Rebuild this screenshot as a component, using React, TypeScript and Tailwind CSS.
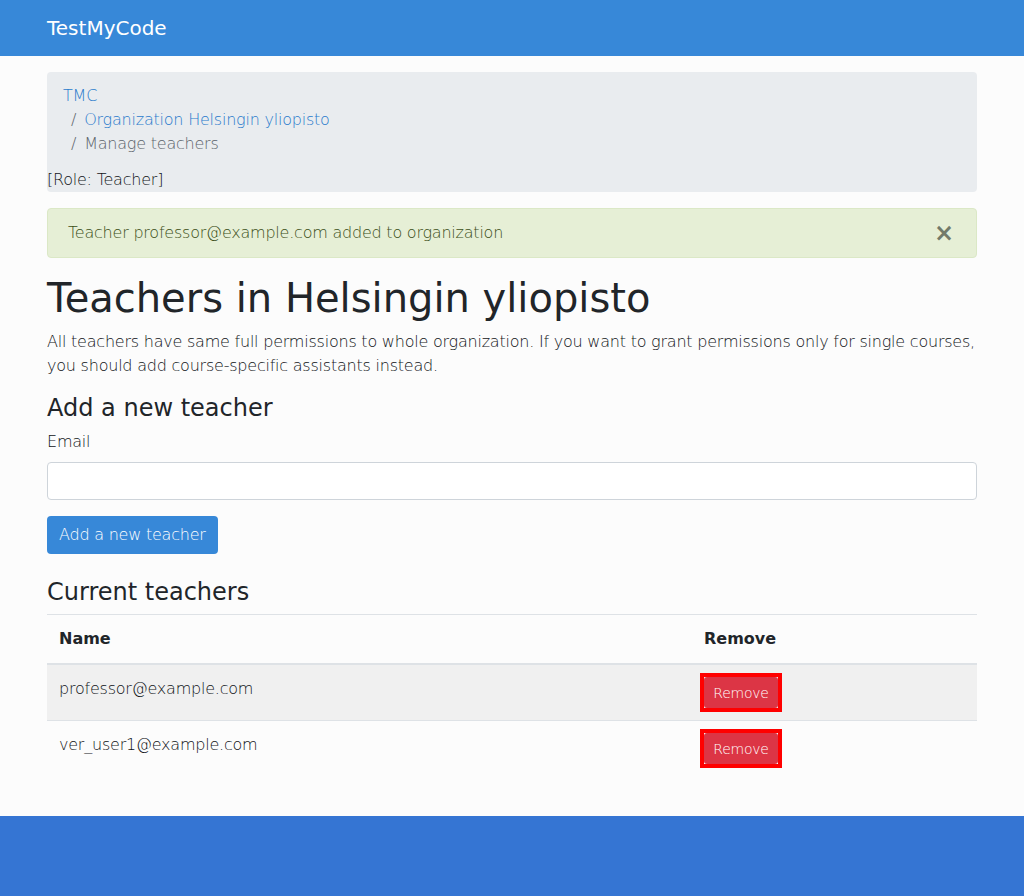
const teachers = ["professor@example.com", "ver_user1@example.com"];

const App = () => {
    return (
        <div className="min-h-[896px] flex flex-col bg-[#fcfcfc] text-[#111418] text-base leading-6 font-light tracking-[-0.22px]" style={{ fontFamily: '"DejaVu Sans", sans-serif' }}>
            <nav className="h-14 bg-[#3788d8] flex items-center">
                <div className="w-[930px] mx-auto">
                    <span className="text-white text-xl leading-[30px] font-normal tracking-normal">TestMyCode</span>
                </div>
            </nav>

            <main className="w-[930px] mx-auto mt-4 mb-10">
                <div className="bg-[#e9ecef] rounded">
                    <ol className="py-3 px-4">
                        <li><a className="text-[#2a7bcc]">TMC</a></li>
                        <li className="pl-2"><span className="text-[#5c646b] pr-2">/</span><a className="text-[#2a7bcc]">Organization Helsingin yliopisto</a></li>
                        <li className="pl-2 text-[#5c646b]"><span className="pr-2">/</span>Manage teachers</li>
                    </ol>
                    <div>[Role: Teacher]</div>
                </div>

                <div className="mt-4 mb-4 flex items-center justify-between border border-[#dbe8c6] bg-[#e6efd6] text-[#3b4e17] rounded py-3 pl-5 pr-5">
                    <span>Teacher professor@example.com added to organization</span>
                    <span className="text-2xl leading-none font-bold text-[#737a69] mr-[2px]">×</span>
                </div>

                <h1 className="text-[40px] leading-[48px] font-medium tracking-normal text-[#212529] mb-2">Teachers in Helsingin yliopisto</h1>
                <p className="mb-4">All teachers have same full permissions to whole organization. If you want to grant permissions only for single courses, you should add course-specific assistants instead.</p>

                <h2 className="text-2xl leading-[28px] font-medium tracking-normal text-[#212529] mb-2">Add a new teacher</h2>
                <label className="block mb-2">Email</label>
                <input type="email" className="block w-full h-[38px] bg-white border border-[#ced4da] rounded px-3 mb-4" />
                <button className="h-[38px] px-3 rounded bg-[#3788d8] text-white">Add a new teacher</button>

                <h2 className="text-2xl leading-[28px] font-medium tracking-normal text-[#212529] mt-6 mb-2">Current teachers</h2>
                <table className="w-full border-collapse">
                    <thead>
                        <tr className="border-t border-[#dee2e6] border-b-2">
                            <th className="w-[645px] text-left font-bold tracking-normal text-[#212529] p-3">Name</th>
                            <th className="text-left font-bold tracking-normal text-[#212529] p-3">Remove</th>
                        </tr>
                    </thead>
                    <tbody>
                        {teachers.map((email, i) => (
                            <tr key={email} className={`border-t border-[#dee2e6] ${i % 2 === 0 ? "bg-[#f0f0f0]" : ""}`}>
                                <td className="p-3 align-top">{email}</td>
                                <td className="p-3 align-top">
                                    <span className="block w-fit -m-1 border-4 border-[#ff0000]">
                                        <button className="block w-[74px] h-[31px] text-sm text-center rounded-[3px] bg-[#dc3545] text-white">Remove</button>
                                    </span>
                                </td>
                            </tr>
                        ))}
                    </tbody>
                </table>
            </main>

            <footer className="mt-auto h-20 bg-[#3575d3]" />
        </div>
    );
};

export default App;
